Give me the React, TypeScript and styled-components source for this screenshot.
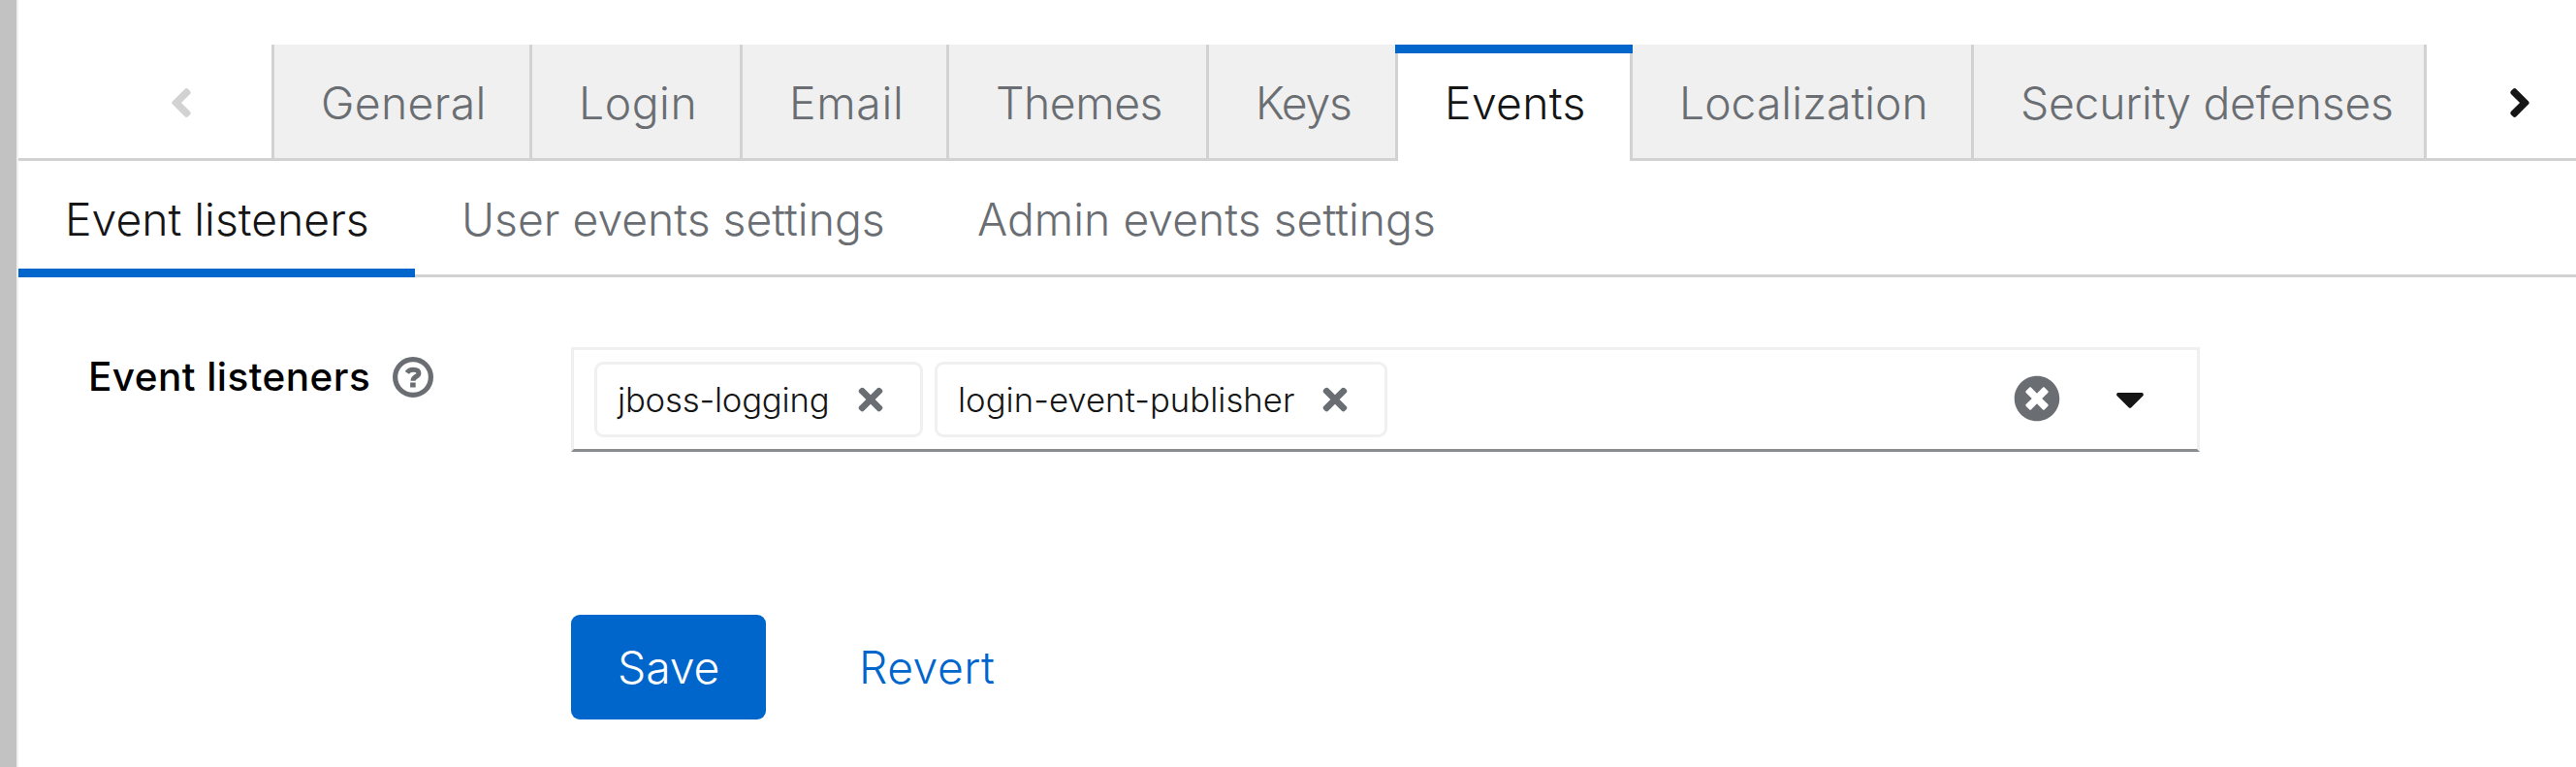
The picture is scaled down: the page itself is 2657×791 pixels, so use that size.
import React from "react";
import styled, { createGlobalStyle, css } from "styled-components";
import { FaAngleLeft, FaAngleRight, FaCaretDown, FaTimes, FaTimesCircle } from "react-icons/fa";

const color = {
  text: "#151515",
  muted: "#6a6e73",
  line: "#d2d2d2",
  soft: "#f0f0f0",
  primary: "#0066cc",
};

const GlobalStyle = createGlobalStyle`
  *, *::before, *::after { box-sizing: border-box; }
  body {
    margin: 0;
    background: #fff;
    color: ${color.text};
    font-family: Inter, "Open Sans", sans-serif;
    font-size: 46.3px;
    font-weight: 300;
    line-height: 72px;
    overflow: hidden;
  }
  button {
    margin: 0;
    border: 0;
    background: none;
    color: inherit;
    font: inherit;
    text-align: left;
    white-space: nowrap;
  }
`;

const Page = styled.div`
  display: flex;
  height: 791px;
`;

const Gutter = styled.div`
  flex: none;
  width: 19px;
  background: #c2c2c2;
  border-right: 2px solid ${color.soft};
`;

const Main = styled.main`
  flex: 1;
  min-width: 0;
  padding-top: 46px;
`;

const TabBar = styled.nav`
  display: flex;
  height: 120px;
  border-bottom: 3px solid ${color.line};
`;

const ScrollButton = styled.button<{ $side: "left" | "right" }>`
  display: flex;
  align-items: center;
  flex: none;
  width: ${(p) => (p.$side === "left" ? 261 : 154)}px;
  padding: 3px 0 0 ${(p) => (p.$side === "left" ? 156 : 84)}px;
  color: ${(p) => (p.$side === "left" ? color.line : color.text)};

  svg {
    width: 24px;
    height: 48px;
  }
`;

const TabList = styled.div`
  display: flex;
  border-left: 3px solid ${color.line};
`;

const Tab = styled.button<{ $width: number; $track: number; $active?: boolean }>`
  position: relative;
  flex: none;
  width: ${(p) => p.$width}px;
  height: 117px;
  padding: 24px 0 21px 48px;
  border-right: 3px solid ${color.line};
  background: ${color.soft};
  color: ${color.muted};
  letter-spacing: ${(p) => p.$track}px;

  ${(p) =>
    p.$active &&
    css`
      height: 120px;
      padding-bottom: 24px;
      background: #fff;
      color: ${color.text};

      &::before {
        content: "";
        position: absolute;
        top: 0;
        left: -3px;
        right: -3px;
        height: 9px;
        background: ${color.primary};
      }
    `}
`;

const SubTabBar = styled.nav`
  display: flex;
  height: 120px;
  border-bottom: 3px solid ${color.line};
`;

const SubTab = styled.button<{ $width: number; $track: number; $active?: boolean }>`
  flex: none;
  width: ${(p) => p.$width}px;
  height: 120px;
  padding: 24px 0 15px 48px;
  color: ${(p) => (p.$active ? color.text : color.muted)};
  border-bottom: 9px solid ${(p) => (p.$active ? color.primary : "transparent")};
  letter-spacing: ${(p) => p.$track}px;
`;

const Form = styled.form`
  display: grid;
  grid-template-columns: 498px 1680px;
  padding: 72px 0 0 72px;
`;

const LabelGroup = styled.div`
  display: flex;
  align-items: center;
  align-self: start;
  height: 54px;
  margin-top: 4px;
  gap: 24px;
`;

const Label = styled.label`
  width: 290px;
  color: #000;
  font-size: 40.5px;
  font-weight: 500;
  letter-spacing: 0.43px;
  line-height: 54px;
  white-space: nowrap;
`;

const HelpIcon = styled.svg`
  flex: none;
  width: 42px;
  height: 42px;
  fill: none;
  stroke: ${color.muted};
`;

const Select = styled.div`
  display: flex;
  align-items: center;
  height: 108px;
  padding: 0 54px 0 21px;
  border: 3px solid ${color.soft};
  border-bottom-color: #8a8d90;
`;

const ChipList = styled.div`
  display: flex;
  flex: 1;
  gap: 12px;
`;

const Chip = styled.div<{ $width: number; $track: number }>`
  display: flex;
  align-items: center;
  justify-content: space-between;
  width: ${(p) => p.$width}px;
  height: 78px;
  padding: 0 38px 0 21px;
  border: 3px solid ${color.soft};
  border-radius: 9px;
  font-size: 34.7px;
  letter-spacing: ${(p) => p.$track}px;
  line-height: 54px;
  white-space: nowrap;

  svg {
    width: 26px;
    height: 36px;
    color: ${color.muted};
  }
`;

const ClearIcon = styled(FaTimesCircle)`
  width: 48px;
  height: 48px;
  margin: -2px 57px 0 0;
  color: ${color.muted};
`;

const CaretIcon = styled(FaCaretDown)`
  width: 30px;
  height: 48px;
  margin-top: -2px;
`;

const Actions = styled.div`
  grid-column: 2;
  display: flex;
  gap: 48px;
  margin-top: 168px;
`;

const ActionButton = styled.button<{ $primary?: boolean; $track: number }>`
  height: 108px;
  width: ${(p) => (p.$primary ? 201 : 236)}px;
  padding: 18px 0 18px 48px;
  border-radius: 9px;
  background: ${(p) => (p.$primary ? color.primary : "transparent")};
  color: ${(p) => (p.$primary ? "#fff" : color.primary)};
  letter-spacing: ${(p) => p.$track}px;
`;

const tabs = [
  { label: "General", width: 266, track: 0.35 },
  { label: "Login", width: 217, track: 0.55 },
  { label: "Email", width: 213, track: 0.7 },
  { label: "Themes", width: 268, track: -0.45 },
  { label: "Keys", width: 195, track: -1.28 },
  { label: "Events", width: 242, track: 0.35 },
  { label: "Localization", width: 352, track: 0 },
  { label: "Security defenses", width: 467, track: -0.25 },
];

const subTabs = [
  { label: "Event listeners", width: 409, track: 0 },
  { label: "User events settings", width: 532, track: 0 },
  { label: "Admin events settings", width: 567, track: 0.02 },
];

const chips = [
  { label: "jboss-logging", width: 339, track: -0.2 },
  { label: "login-event-publisher", width: 467, track: 0.02 },
];

export default function App() {
  return (
    <>
      <GlobalStyle />
      <Page>
        <Gutter />
        <Main>
          <TabBar>
            <ScrollButton $side="left" disabled aria-label="Scroll left">
              <FaAngleLeft />
            </ScrollButton>
            <TabList>
              {tabs.map((t) => (
                <Tab key={t.label} $width={t.width} $track={t.track} $active={t.label === "Events"}>
                  {t.label}
                </Tab>
              ))}
            </TabList>
            <ScrollButton $side="right" aria-label="Scroll right">
              <FaAngleRight />
            </ScrollButton>
          </TabBar>
          <SubTabBar>
            {subTabs.map((t, i) => (
              <SubTab key={t.label} $width={t.width} $track={t.track} $active={i === 0}>
                {t.label}
              </SubTab>
            ))}
          </SubTabBar>
          <Form onSubmit={(e) => e.preventDefault()}>
            <LabelGroup>
              <Label>Event listeners</Label>
              <HelpIcon viewBox="0 0 42 42">
                <circle cx="21" cy="21" r="18.4" strokeWidth="5.2" />
                <path
                  d="M14.8 16.4C16.3 14.1 18.4 13.2 21.2 13.2C24.8 13.2 26.9 14.6 26.9 17C26.9 20.6 21 20 21 24.8"
                  strokeWidth="5"
                />
                <path d="M18.1 29H23.7" strokeWidth="5" />
              </HelpIcon>
            </LabelGroup>
            <Select>
              <ChipList>
                {chips.map((c) => (
                  <Chip key={c.label} $width={c.width} $track={c.track}>
                    <span>{c.label}</span>
                    <FaTimes />
                  </Chip>
                ))}
              </ChipList>
              <ClearIcon />
              <CaretIcon />
            </Select>
            <Actions>
              <ActionButton type="submit" $primary $track={-0.1}>
                Save
              </ActionButton>
              <ActionButton type="button" $track={0.45}>
                Revert
              </ActionButton>
            </Actions>
          </Form>
        </Main>
      </Page>
    </>
  );
}
